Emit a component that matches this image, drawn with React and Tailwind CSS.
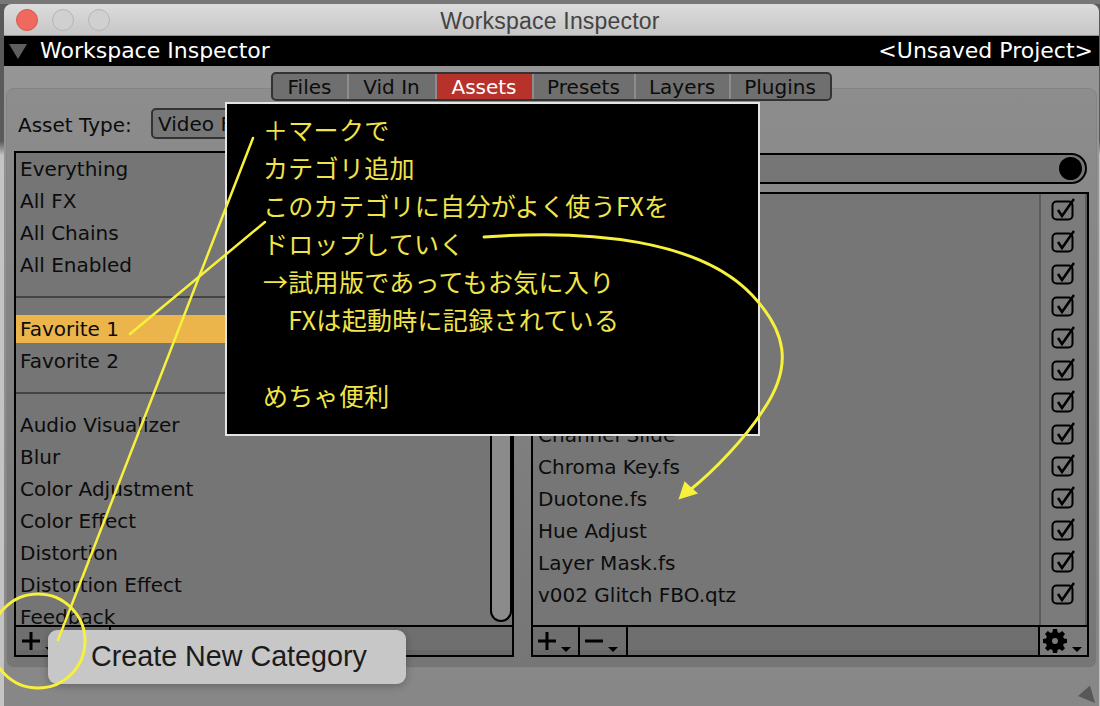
import React from 'react';

const leftTop = ['Everything', 'All FX', 'All Chains', 'All Enabled'];
const leftCats = ['Audio Visualizer', 'Blur', 'Color Adjustment', 'Color Effect', 'Distortion', 'Distortion Effect', 'Feedback'];
const rightFx = ['', '', '', '', '', '', '', 'Channel Slide', 'Chroma Key.fs', 'Duotone.fs', 'Hue Adjust', 'Layer Mask.fs', 'v002 Glitch FBO.qtz'];
const tabs = [
    { name: 'Files', w: 'w-[76px]' },
    { name: 'Vid In', w: 'w-[88px]' },
    { name: 'Assets', w: 'w-[97px]' },
    { name: 'Presets', w: 'w-[102px]' },
    { name: 'Layers', w: 'w-[95px]' },
    { name: 'Plugins', w: 'w-[99px]' }
];
const note = ['\uFF0Bマークで', 'カテゴリ追加', 'このカテゴリに自分がよく使うFXを', 'ドロップしていく', '→試用版であってもお気に入り', '\u3000FXは起動時に記録されている', ' ', 'めちゃ便利'];

const Caret = () => (
    <svg width="10" height="5" viewBox="0 0 10 5" className="self-end mb-[3px] ml-[5px] shrink-0">
        <path d="M0 0h10L5 5z" fill="#000" />
    </svg>
);

const CheckBox = () => (
    <div className="h-[32px] flex items-center justify-center shrink-0">
        <svg width="24" height="26" viewBox="0 0 24 26" fill="none" stroke="#000" className="mb-[1px]">
            <rect x="1.5" y="3.5" width="20" height="18" rx="4" strokeWidth="2" />
            <path d="M7 12l4 6L23 1" strokeWidth="2.6" />
        </svg>
    </div>
);

const Gear = () => (
    <svg width="24" height="24" viewBox="0 0 24 24" className="shrink-0">
        <path
            fill="#000"
            fillRule="evenodd"
            d="M10 0h4l.6 3.2 1.9.8 2.7-1.9 2.8 2.8-1.9 2.7.8 1.9 3.1.5v4l-3.1.6-.8 1.9 1.9 2.7-2.8 2.8-2.7-1.9-1.9.8-.6 3.1h-4l-.6-3.1-1.9-.8-2.7 1.9-2.8-2.8 1.9-2.7-.8-1.9L0 14v-4l3.1-.5.8-1.9L2 4.9l2.8-2.8 2.7 1.9 1.9-.8zM12 9a3 3 0 1 0 0 6 3 3 0 0 0 0-6z"
        />
    </svg>
);

const FootButton = ({ minus, w, pad = 'pl-[5px]' }) => (
    <div className={`${w} ${pad} h-full flex items-center border-r-2 border-black shrink-0`}>
        <svg width="18" height="18" viewBox="0 0 18 18" className="shrink-0">
            <path d={minus ? 'M0 9h18' : 'M0 9h18M9 0v18'} stroke="#000" strokeWidth="3" />
        </svg>
        <Caret />
    </div>
);

const Row = ({ children, selected }) => (
    <div className="h-[32px] shrink-0 flex items-center">
        <div className={`w-full h-[28px] flex items-center pl-[4px] text-[20px] text-[#0c0c0c] whitespace-nowrap ${selected ? 'bg-[#ebb54c] -mt-[1px]' : ''}`}>
            <span className={selected ? 'mt-[1px]' : ''}>{children}</span>
        </div>
    </div>
);

const Separator = () => <div className="h-[32px] shrink-0 flex items-center"><div className="w-full h-[2px] bg-[#444444]" /></div>;

export default function App() {
    return (
        <div className="relative w-[1100px] h-[706px] overflow-hidden bg-gradient-to-b from-[#5a5a5a] from-[20%] to-[#c4c4c4] to-[22%] font-['DejaVu_Sans','Noto_Sans_CJK_JP',sans-serif]">
            {/* desktop peeking above the window */}
            <div className="h-[4px] bg-[#777777]" />

            <div className="ml-[4px] w-[1095px] h-[702px] flex flex-col rounded-t-[8px] overflow-hidden bg-gradient-to-b from-[#979797] to-[#878787]">
                {/* title bar */}
                <div className="h-[32px] shrink-0 relative flex items-center justify-center pt-[3px] bg-gradient-to-b from-[#dcdcdc] to-[#c6c6c6] border-b border-[#8f8f8f]">
                    <div className="absolute left-[12px] top-[5px] flex gap-[14px]">
                        <div className="w-[22px] h-[22px] rounded-full bg-[#ee6a5f] border border-[#d9564c]" />
                        <div className="w-[22px] h-[22px] rounded-full bg-[#d0d0d0] border border-[#b6b6b6]" />
                        <div className="w-[22px] h-[22px] rounded-full bg-[#d0d0d0] border border-[#b6b6b6]" />
                    </div>
                    <span className="text-[#444444] text-[23px] -ml-[3px] font-['Liberation_Sans',sans-serif] tracking-[0.2px]">Workspace Inspector</span>
                </div>

                {/* header strip */}
                <div className="h-[30px] shrink-0 bg-black flex items-center justify-between pr-[6px] pb-[2px] text-white text-[22px]">
                    <div className="flex items-center">
                        <svg width="18" height="15" viewBox="0 0 18 15" className="ml-[5px] mr-[13px] mt-[3px]">
                            <path d="M0 0h18L9 15z" fill="#5e5e5e" />
                        </svg>
                        <span>Workspace Inspector</span>
                    </div>
                    <span>&lt;Unsaved Project&gt;</span>
                </div>

                {/* tabs */}
                <div className="relative z-10 mt-[6px] ml-[267px] w-[561px] h-[29px] shrink-0 flex rounded-[5px] border-2 border-[#333333] overflow-hidden bg-[#6f6f6f]">
                    {tabs.map(t => (
                        <div
                            key={t.name}
                            className={`${t.w} flex items-center justify-center pr-[1px] text-[20px] border-r-2 border-[#8d8d8d] last:border-r-0 ${t.name === 'Assets' ? 'bg-[#b8322c] text-white' : 'text-[#0c0c0c]'}`}
                        >
                            {t.name}
                        </div>
                    ))}
                </div>

                {/* main panel */}
                <div className="-mt-[13px] mx-[2px] h-[580px] shrink-0 rounded-[8px] border border-[#848484] bg-gradient-to-b from-[#8d8d8d] to-[#767676] px-[7px] flex flex-col">
                    <div className="mt-[19px] h-[31px] shrink-0 flex items-center">
                        <span className="text-[20px] text-[#0c0c0c] w-[137px] pl-[4px] pt-[2px]">Asset Type:</span>
                        <div className="w-[190px] h-[31px] rounded-[5px] border-2 border-[#333333] bg-[#777777] pl-[5px] pt-[1px] flex items-center text-[20px] text-[#0c0c0c]">Video FX</div>
                    </div>

                    <div className="mt-[12px] flex gap-[17px]">
                        {/* category column */}
                        <div className="w-[500px] h-[506px] shrink-0 border-2 border-black flex flex-col bg-[#757575]">
                            <div className="flex-1 min-h-0 flex overflow-hidden">
                                <div className="flex-1 min-w-0 flex flex-col">
                                    {leftTop.map(r => <Row key={r}>{r}</Row>)}
                                    <Separator />
                                    <Row selected>Favorite 1</Row>
                                    <Row>Favorite 2</Row>
                                    <Separator />
                                    {leftCats.map(r => <Row key={r}>{r}</Row>)}
                                </div>
                                <div className="w-[22px] mb-[3px] shrink-0 rounded-b-[11px] border-2 border-t-0 border-black bg-[#8b8b8b]" />
                            </div>
                            <div className="h-[30px] shrink-0 border-t-2 border-black flex bg-[#6f6f6f] shadow-[inset_0_-5px_0_#686868]">
                                <FootButton w="w-[47px]" pad="pl-[6px]" />
                                <FootButton minus w="w-[48px]" />
                            </div>
                        </div>

                        {/* effect column */}
                        <div className="w-[558px] shrink-0 flex flex-col">
                            <div className="mt-[2px] mr-[2px] h-[31px] shrink-0 rounded-full border-2 border-black bg-[#767676] flex items-center justify-end pr-[3px]">
                                <div className="w-[23px] h-[23px] rounded-full bg-black" />
                            </div>
                            <div className="mt-[8px] h-[465px] border-2 border-black flex flex-col bg-[#767676]">
                                <div className="flex-1 min-h-0 flex overflow-hidden">
                                    <div className="flex-1 min-w-0 flex flex-col pt-[1px] pl-[1px]">
                                        {rightFx.map((r, i) => <Row key={i}>{r}</Row>)}
                                    </div>
                                    <div className="w-[48px] shrink-0 border-l-2 border-r-2 border-[#5c5c5c] flex flex-col pt-[1px] bg-[#7b7b7b]">
                                        {rightFx.map((_, i) => <CheckBox key={i} />)}
                                    </div>
                                </div>
                                <div className="h-[30px] shrink-0 border-t-2 border-black flex bg-[#6f6f6f] shadow-[inset_0_-5px_0_#686868]">
                                    <FootButton w="w-[47px]" />
                                    <FootButton minus w="w-[48px]" />
                                    <div className="flex-1 border-r-2 border-black" />
                                    <div className="w-[47px] shrink-0 flex items-center pl-[3px] bg-[#7c7c7c]">
                                        <Gear />
                                        <Caret />
                                    </div>
                                </div>
                            </div>
                        </div>
                    </div>
                </div>

                <div className="flex-1 relative">
                    <svg width="20" height="20" viewBox="0 0 20 20" className="absolute right-[4px] bottom-[3px]">
                        <path d="M3 13L15 2.6 20 20z" fill="#585858" />
                    </svg>
                </div>
            </div>

            {/* black note */}
            <div className="absolute left-[225px] top-[102px] w-[535px] h-[334px] bg-black border-2 border-[#e4e4e4] pl-[36px] pt-[6px] text-[#f0e44a] text-[25px] tracking-[0.3px] leading-[38px] font-['Noto_Sans_CJK_JP',sans-serif]">
                {note.map((line, i) => <div key={i} className="h-[38px] whitespace-pre">{line}</div>)}
            </div>

            {/* popup menu */}
            <div className="absolute left-[48px] top-[630px] w-[358px] h-[54px] rounded-[9px] bg-[#c7c7c7] shadow-[0_2px_8px_rgba(0,0,0,0.25)] flex items-center pl-[43px] text-[#1b1b1b] text-[28.7px] font-['Liberation_Sans',sans-serif]">
                Create New Category
            </div>

            {/* hand drawn marks */}
            <svg width="1100" height="706" viewBox="0 0 1100 706" className="absolute left-0 top-0 pointer-events-none" fill="none" stroke="#f7f03c" strokeLinecap="round">
                <circle cx="38" cy="641" r="47" strokeWidth="3" />
                <path d="M253 138L58 640" strokeWidth="2.5" />
                <path d="M265 222L130 334" strokeWidth="2.5" />
                <path d="M484 237C590 229 700 240 752 295C785 330 795 365 762 412C745 438 715 470 690 490" strokeWidth="3" />
                <path d="M680 498L685 483L696 493z" fill="#f7f03c" strokeWidth="2" />
            </svg>
        </div>
    );
}
